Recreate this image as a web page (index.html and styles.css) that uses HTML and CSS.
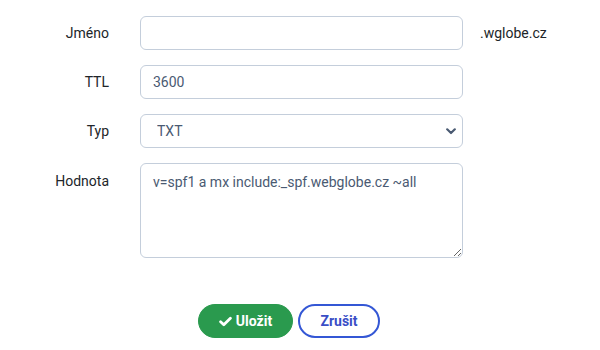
FILE: index.html
```html
<!DOCTYPE html>
<html lang="cs">
<head>
<meta charset="utf-8">
<link rel="stylesheet" href="styles.css">
</head>
<body>
<form class="form">
  <div class="row">
    <label class="lbl" for="name">Jméno</label>
    <input class="ctl" id="name" type="text">
    <span class="suffix">.wglobe.cz</span>
  </div>
  <div class="row">
    <label class="lbl" for="ttl">TTL</label>
    <input class="ctl" id="ttl" type="text" value="3600">
  </div>
  <div class="row">
    <label class="lbl" for="typ">Typ</label>
    <div class="select-wrap">
      <select class="ctl sel" id="typ"><option>TXT</option></select>
      <svg class="chev" width="10" height="7" viewBox="0 0 10 7"><path d="M1.2 1.3 L5 5 L8.8 1.3" fill="none" stroke="#4a5a72" stroke-width="2.2" stroke-linecap="round" stroke-linejoin="round"/></svg>
    </div>
  </div>
  <div class="row top">
    <label class="lbl" for="val">Hodnota</label>
    <textarea class="ctl area" id="val">v=spf1 a mx include:_spf.webglobe.cz ~all</textarea>
  </div>
  <div class="actions">
    <button type="button" class="btn save"><svg class="check" width="13" height="11" viewBox="0 0 13 11"><path d="M1.6 5.8 L4.8 8.8 L11.4 2.2" fill="none" stroke="#fff" stroke-width="2.8" stroke-linecap="round" stroke-linejoin="round"/></svg>Uložit</button>
    <button type="button" class="btn cancel">Zrušit</button>
  </div>
</form>
</body>
</html>
```
FILE: styles.css
```css
html, body {
  margin: 0;
  background: #fff;
}
body {
  font-family: Roboto, "Liberation Sans", sans-serif;
  font-size: 14px;
  color: #212529;
}
.form {
  padding-top: 16px;
}
.row {
  display: flex;
  align-items: center;
  margin-bottom: 15px;
}
.row.top {
  align-items: flex-start;
}
.lbl {
  width: 109px;
  margin-right: 31px;
  text-align: right;
  line-height: 20px;
  flex: none;
}
.row.top .lbl {
  padding-top: 8px;
}
.ctl {
  box-sizing: border-box;
  width: 323px;
  height: 34px;
  border: 1px solid #c4cedb;
  border-radius: 6px;
  padding: 6px 12px;
  font-family: Roboto, "Liberation Sans", sans-serif;
  font-size: 14px;
  line-height: 20px;
  color: #4a5a72;
  background: #fff;
  outline: none;
  margin: 0;
}
.suffix {
  margin-left: 17px;
  color: #212529;
}
.select-wrap {
  position: relative;
  width: 323px;
  height: 34px;
}
.sel {
  appearance: none;
  -webkit-appearance: none;
  padding-left: 16px;
}
.chev {
  position: absolute;
  right: 7px;
  top: 14px;
}
.area {
  height: 95px;
  padding-top: 8px;
  resize: vertical;
}
.actions {
  display: flex;
  gap: 5px;
  padding-left: 198px;
  margin-top: 46px;
}
.btn {
  box-sizing: border-box;
  height: 34px;
  border-radius: 17px;
  font-family: Roboto, "Liberation Sans", sans-serif;
  font-size: 14px;
  font-weight: 700;
  display: flex;
  align-items: center;
  justify-content: center;
  padding: 0;
  cursor: pointer;
}
.save {
  width: 95px;
  background: #2a9a4e;
  border: 1px solid #2a9a4e;
  color: #fff;
  gap: 4px;
}
.cancel {
  width: 82px;
  background: #fff;
  border: 2px solid #3457d5;
  color: #3a4ec6;
}
```
